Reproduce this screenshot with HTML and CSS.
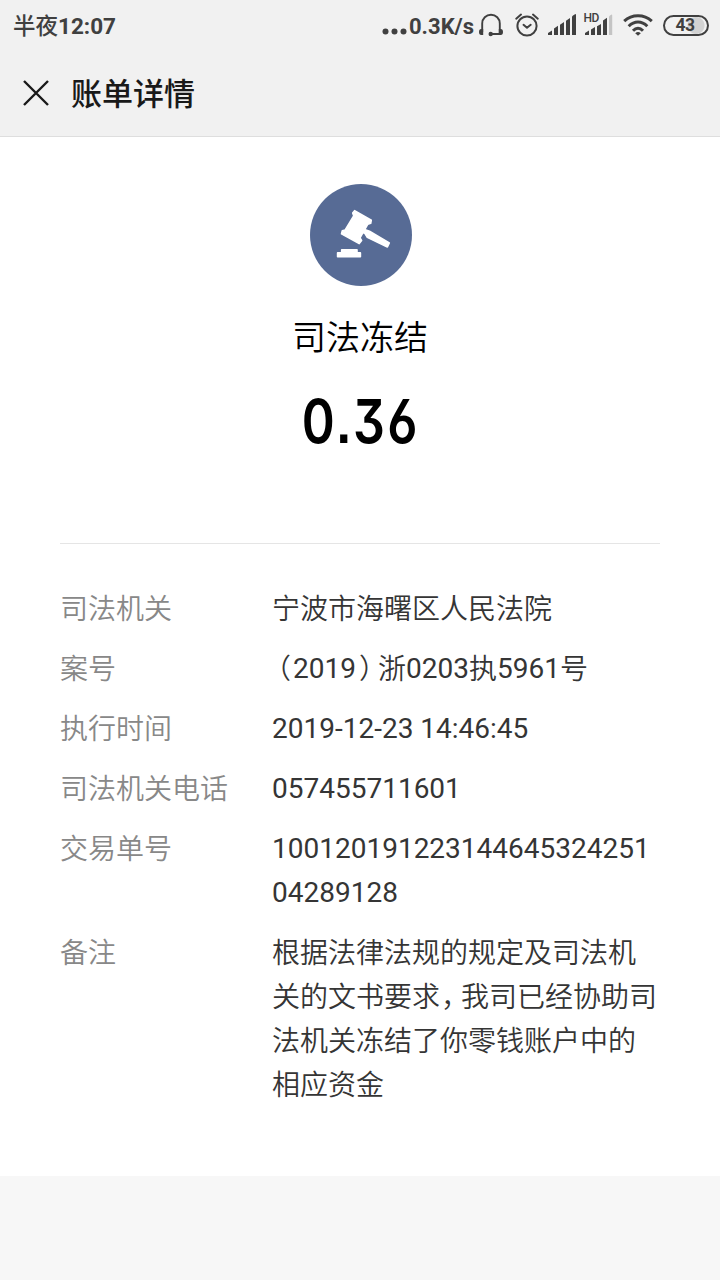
FILE: index.html
```
<!DOCTYPE html>
<html lang="zh-CN">
<head>
    <meta charset="UTF-8">
    <title>账单详情</title>
    <link rel="stylesheet" href="styles.css">
</head>
<body>

<!-- 顶部 -->
<header class="header">
    <div class="status-bar">
        <span class="time"><span class="time-cn">半夜</span>12:07</span>
        <div class="status-icons">
            <svg class="icon-dots" width="25" height="36" viewBox="0 0 25 36">
                <g fill="#404040"><circle cx="3.5" cy="23.5" r="3"/><circle cx="12.5" cy="23.5" r="3"/><circle cx="21.5" cy="23.5" r="3"/></g>
            </svg>
            <span class="speed">0.3K/s</span>
            <!-- 耳机 -->
            <svg class="icon-headset" width="26" height="28" viewBox="0 0 26 28">
                <path d="M4.2 19V10.5a8.8 8.8 0 0 1 17.6 0V21H13" fill="none" stroke="#404040" stroke-width="1.9"/>
                <path d="M5.2 16v6H3.2Q1 22 1 19t2.2-3zM20.8 16v6h2q2.2 0 2.2-3t-2.2-3z" fill="#404040"/>
                <circle cx="12.7" cy="21" r="2.2" fill="#404040"/>
            </svg>
            <!-- 闹钟 -->
            <svg class="icon-alarm" width="26" height="28" viewBox="0 0 26 28">
                <g fill="none" stroke="#404040" stroke-width="2" stroke-linecap="round" stroke-linejoin="round">
                    <circle cx="13" cy="14" r="9.6"/>
                    <path d="M9.5 12.8l3.5 3 3.7-3M2.2 6.7L7 2.6M23.8 6.7L19 2.6"/>
                </g>
            </svg>
            <!-- 信号 -->
            <svg class="icon-signal" width="29" height="22" viewBox="0 0 29 22">
                <path d="M0 21v-2l4-2.6V21zM6 21v-6.5l4-2.7V21zM12 21V10.7l4-2.6V21zM18 21V6.8l4-2.7V21zM24 21V3q0-1 1-1.6l2-1.2q1-.4 1 .8v20z" fill="#404040"/>
            </svg>
            <svg class="icon-hd" width="29" height="28" viewBox="0 -4 29 28">
                <text x="-0.5" y="9.3" class="hd-text">HD</text>
                <path d="M1 22v-2l4-2.6V22zM7 22v-5.5l4-2.6V22zM13 22v-8.8l4-2.2v11zM19 22V7.5l4-2.7V22z" fill="#404040"/>
                <path d="M25 22V4q0-1 1-1.6l1.2-.7q1-.4 1 .8V22z" fill="#c4c4c4"/>
            </svg>
            <!-- WiFi -->
            <svg class="icon-wifi" width="30" height="22" viewBox="0 0 30 22">
                <g fill="none" stroke="#404040" stroke-width="3">
                    <path d="M1.2 7.2Q7 1.8 15 1.8t13.8 5.4M5.7 12.2Q10 8 15 8t9.3 4.2M10 16.7q2.4-2.5 5-2.5t5 2.5"/>
                </g>
                <path d="M12.2 19.2q2.8-2.4 5.6 0L15 21.8z" fill="#404040"/>
            </svg>
            <!-- 电量 -->
            <div class="battery"><span>43</span></div>
        </div>
    </div>

    <div class="nav">
        <svg class="close" width="26" height="26" viewBox="0 0 26 26">
            <path d="M1 1l24 24M25 1L1 25" stroke="#191919" stroke-width="2.4"/>
        </svg>
        <h1>账单详情</h1>
    </div>
</header>

<main class="bill">
    <div class="summary">
        <svg class="logo" width="102" height="102" viewBox="0 0 102 102">
            <circle cx="51" cy="51" r="51" fill="#576b95"/>
            <g fill="#fff" stroke="#fff" stroke-width="1.6" stroke-linejoin="round">
                <path d="M44.6 26.7L61.3 36.2L60.7 39.3L57.8 40.2L50 53.8L51.6 56.5L49.2 59.6L31.5 49.9L32.3 46.8L35.2 46L43.7 31.8L42.7 29z"/>
                <path d="M52.5 44.8L59.5 47.2L79.3 59L77.4 63L57.3 53.4L54.7 49.2L51 47.5z"/>
                <path d="M31.7 65.8H47V68.9H50.4V72.8H27.6V68.9H31.7z"/>
            </g>
        </svg>
        <div class="name">司法冻结</div>
        <div class="amount">0.36</div>
    </div>

    <!-- 明细 -->
    <div class="details">
        <div class="row">
            <div class="label">司法机关</div>
            <div class="value cn">宁波市海曙区人民法院</div>
        </div>
        <div class="row">
            <div class="label">案号</div>
            <div class="value case-no"><span class="paren-left">（</span>2019<span class="paren-right">）</span><span>浙</span>0203<span>执</span>5961<span>号</span></div>
        </div>
        <div class="row">
            <div class="label">执行时间</div>
            <div class="value">2019-12-23 14:46:45</div>
        </div>
        <div class="row">
            <div class="label">司法机关电话</div>
            <div class="value">057455711601</div>
        </div>
        <div class="row">
            <div class="label">交易单号</div>
            <div class="value">10012019122314464532425104289128</div>
        </div>
        <div class="row">
            <div class="label">备注</div>
            <div class="value cn">根据法律法规的规定及司法机关的文书要求<span class="comma">，</span>我司已经协助司法机关冻结了你零钱账户中的相应资金</div>
        </div>
    </div>
</main>

</body>
</html>
```
FILE: styles.css
```
* {
    box-sizing: border-box;
}
body {
    margin: 0;
    min-height: 1280px;
    background-color: #f7f7f7;
    font-family: Roboto, "Noto Sans CJK SC", sans-serif;
    color: #353535;
}
.header {
    height: 137px;
    background-color: #f1f1f1;
    border-bottom: 1px solid #dedede;
}
.status-bar {
    display: flex;
    justify-content: space-between;
    height: 50px;
    padding: 0 11px 0 13px;
    color: #404040;
    font-size: 22.5px;
    font-weight: bold;
    line-height: 52px;
}
.time-cn {
    font-weight: 500;
}
.status-icons {
    display: flex;
    align-items: flex-start;
}
.icon-dots {
    margin-top: 8px;
    margin-right: 2px;
}
.speed {
    width: 66px;
    white-space: nowrap;
    font-size: 22px;
    line-height: 53px;
}
.icon-headset {
    margin: 13px 0 0 3px;
}
.icon-alarm {
    margin: 12px 0 0 10px;
}
.icon-signal {
    margin: 14px 0 0 8px;
}
.icon-hd {
    margin: 9px 0 0 7px;
    overflow: visible;
}
.hd-text {
    font-size: 12px;
    font-weight: 500;
    letter-spacing: -0.5px;
    fill: #404040;
}
.icon-wifi {
    margin: 14px 0 0 10px;
}
.battery {
    width: 46px;
    height: 21px;
    margin: 15px 0 0 10px;
    padding-right: 2px;
    border: 2px solid #404040;
    border-radius: 11px;
    background: radial-gradient(circle at 31px 50%, #d2d2d2 8px, transparent 9px);
    font-size: 17.5px;
    line-height: 17px;
    text-align: center;
    letter-spacing: -0.5px;
}
.nav {
    display: flex;
    align-items: center;
    height: 86px;
    padding-left: 23px;
}
.nav h1 {
    margin: 0 0 3px 22px;
    font-size: 31px;
    font-weight: 500;
    color: #191919;
}
.bill {
    height: 1039px;
    padding: 47px 60px 0;
    background-color: white;
}
.summary {
    display: flex;
    flex-direction: column;
    align-items: center;
    height: 360px;
    border-bottom: 1px solid #e5e5e5;
    color: black;
}
.logo {
    flex: none;
    margin-left: 2px;
}
.name {
    margin-top: 27px;
    font-size: 34px;
    line-height: 50px;
    font-weight: 350;
}
.amount {
    margin-top: 20px;
    padding-left: 3px;
    font-family: Inter, Roboto, sans-serif;
    font-size: 61px;
    font-weight: 600;
    line-height: 76px;
    letter-spacing: 3px;
    font-feature-settings: "cv03", "cv09", "ss07";
    transform: scaleX(0.82);
}
.details {
    display: flex;
    flex-direction: column;
    gap: 16px;
    padding-top: 43px;
    font-size: 28px;
    line-height: 44px;
}
.row {
    display: flex;
}
.label {
    flex: none;
    width: 212px;
    margin: 1px 0 -1px;
    color: #888;
    font-weight: 350;
}
.value {
    flex: 1;
    word-break: break-all;
}
.cn {
    margin: 1px 0 -1px;
    font-weight: 350;
}
.case-no span {
    font-weight: 350;
    line-height: 1;
    vertical-align: -1px;
}
/* 半宽标点 */
.paren-left, .paren-right, .comma {
    font-feature-settings: "halt";
}
.paren-left {
    margin: 0 2px 0 5px;
}
.paren-right {
    margin: 0 5px 0 3px;
}
.comma {
    margin: 0 6px 0 1px;
}
```
